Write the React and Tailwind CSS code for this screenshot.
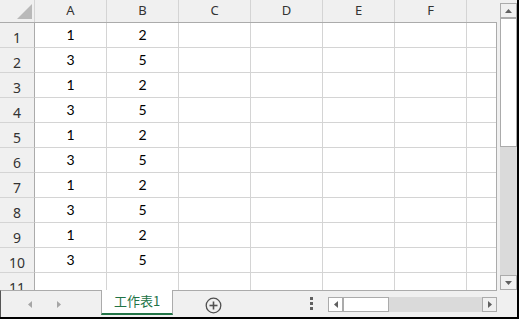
const cols = ['A', 'B', 'C', 'D', 'E', 'F'];

function Tri({ dir, color = '#606060', w = 7, h = 4 }) {
  let pts;
  if (dir === 'up') pts = `0,${h} ${w},${h} ${w / 2},0`;
  if (dir === 'down') pts = `0,0 ${w},0 ${w / 2},${h}`;
  if (dir === 'left') pts = `${w},0 ${w},${h} 0,${h / 2}`;
  if (dir === 'right') pts = `0,0 0,${h} ${w},${h / 2}`;
  return (
    <svg width={w} height={h} viewBox={`0 0 ${w} ${h}`} className="block">
      <polygon points={pts} fill={color} />
    </svg>
  );
}

export default function App() {
  const rows = Array.from({ length: 11 }, (_, i) =>
    i === 10 ? ['', ''] : i % 2 === 0 ? [1, 2] : [3, 5]
  );
  const hdrFont = { fontFamily: '"Noto Sans", "Open Sans", sans-serif' };
  const cellFont = { fontFamily: 'Lato, "Liberation Sans", sans-serif' };
  return (
    <div className="w-[519px] h-[319px] bg-[#f0f0f0] border-r-2 border-b-2 border-black flex flex-col overflow-hidden">
      <div className="flex h-[290px]">
        <div className="w-[497px] flex flex-col">
          <div className="flex h-[23px] border-b border-[#ababab]" style={hdrFont}>
            <div className="w-[35px] border-r border-[#d4d4d4] flex items-end justify-end pr-[2px] pb-[3px]">
              <svg width="15" height="15" viewBox="0 0 15 15" className="block">
                <polygon points="15,0 15,15 0,15" fill="#b9b9b9" />
              </svg>
            </div>
            {cols.map((c) => (
              <div
                key={c}
                className="w-[72px] border-r border-[#d4d4d4] flex items-center justify-center text-[13px] leading-none text-[#333] pb-[1px]"
              >
                {c}
              </div>
            ))}
            <div className="flex-1" />
          </div>
          <div className="flex-1 overflow-hidden bg-white border-r border-[#ababab]">
            {rows.map((r, i) => (
              <div key={i} className="flex h-[25px] shrink-0">
                <div
                  className="w-[35px] bg-[#f0f0f0] border-r border-b border-r-[#ababab] border-b-[#d4d4d4] flex items-end justify-center pb-[2px] text-[14px] leading-none text-[#333]"
                  style={hdrFont}
                >
                  {i + 1}
                </div>
                {cols.map((c, j) => (
                  <div
                    key={c}
                    className="w-[72px] border-r border-b border-[#d4d4d4] flex items-center justify-center text-[14px] leading-none text-black"
                    style={cellFont}
                  >
                    {j < 2 ? r[j] : ''}
                  </div>
                ))}
                <div className="flex-1 border-b border-[#d4d4d4]" />
              </div>
            ))}
          </div>
        </div>
        <div className="w-[3px]" />
        <div className="w-[17px] flex flex-col pt-[3px]">
          <div className="h-[15px] border border-[#ababab] bg-[#f0f0f0] flex items-center justify-center">
            <Tri dir="up" />
          </div>
          <div className="h-[129px] border border-[#ababab] bg-white" />
          <div className="flex-1 bg-[#dadada]" />
          <div className="h-[15px] border border-[#ababab] bg-[#f0f0f0] flex items-center justify-center">
            <Tri dir="down" />
          </div>
        </div>
      </div>
      <div className="flex h-[27px]">
        <div className="w-[497px] flex items-start border-t border-l border-t-[#ababab] border-l-[#555]">
          <div className="w-[100px] h-[26px] flex items-center pl-[27px]">
            <Tri dir="left" color="#a6a6a6" w={4} h={7} />
            <div className="ml-[25px]">
              <Tri dir="right" color="#a6a6a6" w={4} h={7} />
            </div>
          </div>
          <div
            className="relative -mt-px w-[72px] h-[25px] bg-white border-l border-r border-[#ababab] border-b-2 border-b-[#217346] flex items-center justify-center text-[13px] leading-none text-[#217346] pb-[2px]"
            style={{ fontFamily: '"Noto Sans CJK TC", "Noto Sans", sans-serif' }}
          >
            工作表1
          </div>
          <div className="ml-[32px] mt-[6px]">
            <svg width="17" height="17" viewBox="0 0 17 17" className="block">
              <circle cx="8.5" cy="8.5" r="7.3" fill="none" stroke="#505050" strokeWidth="1.3" />
              <line x1="8.5" y1="4.5" x2="8.5" y2="12.5" stroke="#505050" strokeWidth="1.6" />
              <line x1="4.5" y1="8.5" x2="12.5" y2="8.5" stroke="#505050" strokeWidth="1.6" />
            </svg>
          </div>
          <div className="ml-[88px] mt-[6px]">
            <svg width="3" height="13" viewBox="0 0 3 13" className="block">
              <rect x="0" y="0" width="3" height="3" fill="#606060" />
              <rect x="0" y="5" width="3" height="3" fill="#606060" />
              <rect x="0" y="10" width="3" height="3" fill="#606060" />
            </svg>
          </div>
          <div className="ml-[15px] mt-[6px] w-[169px] h-[15px] flex">
            <div className="w-[15px] border border-[#ababab] bg-white flex items-center justify-center">
              <Tri dir="left" w={4} h={7} />
            </div>
            <div className="w-[46px] border border-[#ababab] bg-white" />
            <div className="flex-1 bg-[#dadada]" />
            <div className="w-[15px] border border-[#ababab] bg-[#f0f0f0] flex items-center justify-center">
              <Tri dir="right" w={4} h={7} />
            </div>
          </div>
        </div>
      </div>
    </div>
  );
}
